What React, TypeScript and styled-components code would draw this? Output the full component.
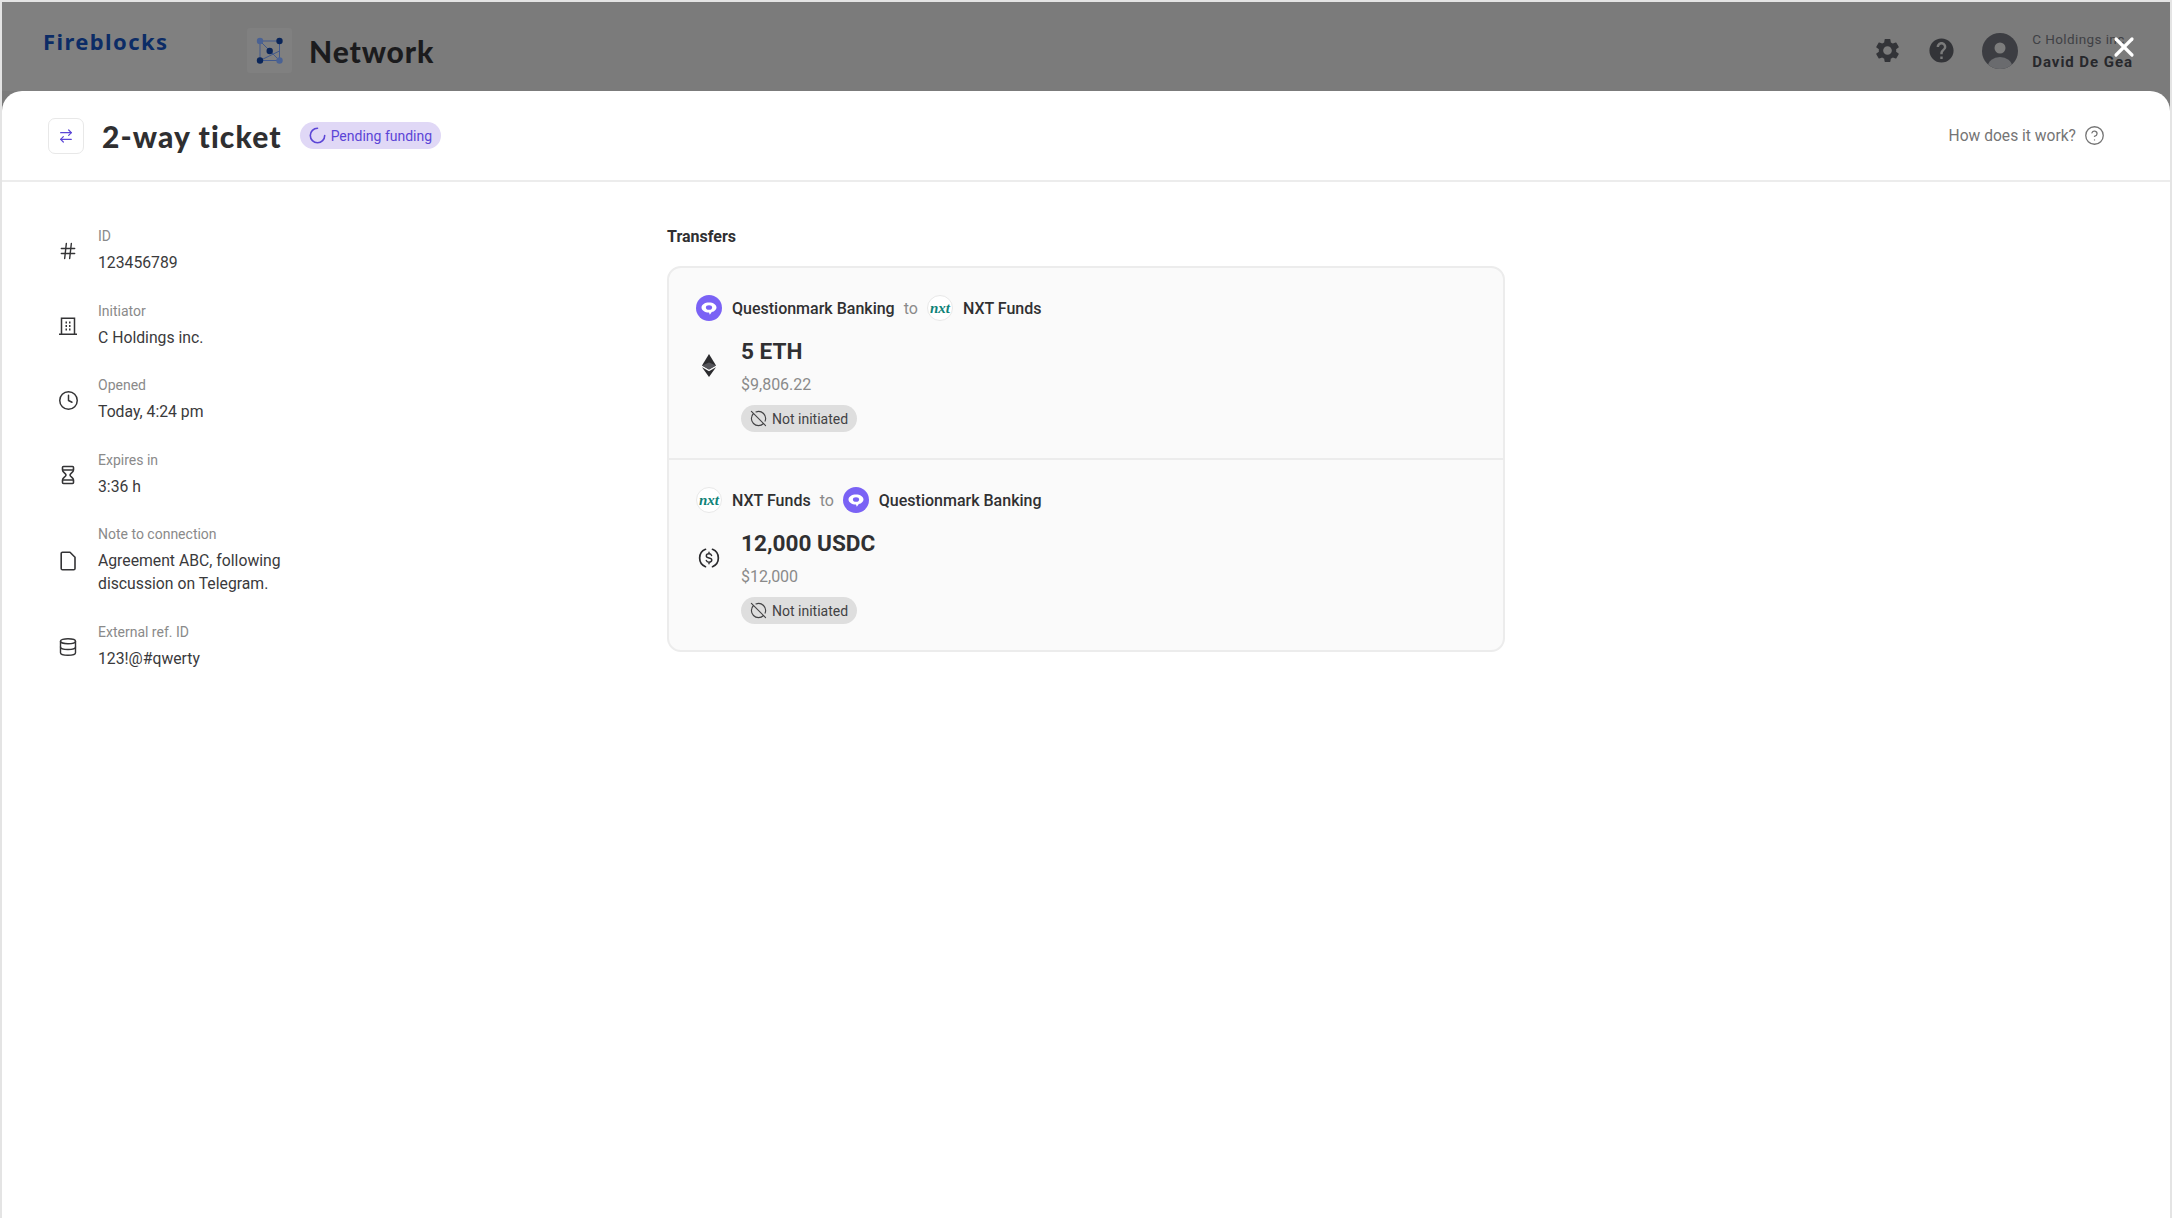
import React from 'react';
import styled, { createGlobalStyle } from 'styled-components';
import { ArrowRightLeft, CircleHelp, CircleOff, Clock, Database, Hash, X } from 'lucide-react';
import { MdHelp, MdSettings } from 'react-icons/md';

const GlobalStyle = createGlobalStyle`
  html, body {
    margin: 0;
    padding: 0;
    background: #fff;
    font-family: Roboto, 'Liberation Sans', sans-serif;
  }
  * {
    box-sizing: border-box;
  }
`;

function OfficeIcon() {
  return (
    <svg width="20" height="20" viewBox="0 0 20 20" fill="none" stroke="currentColor" strokeWidth="1.5">
      <path d="M1 18.2h18M3.5 18V2.2h13V18" />
      <path d="M7.5 6.500h1.500M11 6.500h1.500M7.500 10h1.500M11 10h1.500M7.500 13.500h1.500M11 13.500h1.500" strokeWidth="1.8" />
    </svg>
  );
}

function HourglassIcon() {
  return (
    <svg width="20" height="20" viewBox="0 0 20 20" fill="none" stroke="currentColor" strokeWidth="1.6" strokeLinejoin="round">
      <path d="M5.500 1.500h9a1 1 0 0 1 1 1V5c0 2.500-3.500 3-3.500 5s3.500 2.500 3.500 5v2.500a1 1 0 0 1-1 1h-9a1 1 0 0 1-1-1V15c0-2.500 3.500-3 3.500-5S4.500 7.500 4.500 5V2.500a1 1 0 0 1 1-1z" />
      <path d="M4.500 5h11M4.500 15h11" />
    </svg>
  );
}

function FileIcon() {
  return (
    <svg width="20" height="20" viewBox="0 0 20 20" fill="none" stroke="currentColor" strokeWidth="1.6" strokeLinejoin="round">
      <path d="M4.500 1.200h7.500l5 5v11.300a1.300 1.300 0 0 1-1.300 1.300H4.500a1.300 1.300 0 0 1-1.300-1.300v-15a1.300 1.300 0 0 1 1.300-1.300z" />
    </svg>
  );
}

function NetworkLogo() {
  return (
    <svg width="30" height="30" viewBox="0 0 30 30" fill="none">
      <path d="M5 5h19.500v19.500H5zM5 5l19.500 19.500M5 24.500L24.500 15" stroke="#41598c" strokeWidth="1" />
      <circle cx="5" cy="5" r="3.200" fill="#4a6294" />
      <circle cx="24.500" cy="5" r="3.200" fill="#0a2559" />
      <circle cx="14.700" cy="15" r="3.200" fill="#0a2559" />
      <circle cx="5" cy="24.500" r="3.200" fill="#0a2559" />
      <circle cx="24.500" cy="24.500" r="3.200" fill="#4a6294" />
    </svg>
  );
}

function AvatarIcon() {
  return (
    <svg width="36" height="36" viewBox="0 0 36 36">
      <defs>
        <clipPath id="avatar-clip">
          <circle cx="18" cy="18" r="18" />
        </clipPath>
      </defs>
      <circle cx="18" cy="18" r="18" fill="#3c3d42" />
      <circle cx="18" cy="15" r="5.500" fill="#7c7c7c" />
      <ellipse cx="18" cy="33" rx="12" ry="9" fill="#6a6b6e" clipPath="url(#avatar-clip)" />
    </svg>
  );
}

function SpinnerIcon() {
  return (
    <svg width="17" height="17" viewBox="0 0 17 17" fill="none" stroke="#5b45d6" strokeWidth="1.6" strokeLinecap="round">
      <path d="M8.500 1.300A7.200 7.200 0 1 0 15.700 8.500" />
    </svg>
  );
}

function EthIcon() {
  return (
    <svg width="14" height="23" viewBox="0 0 14 23">
      <path d="M7 0L0 11.500 7 15.500 14 11.500z" fill="#2b2b2e" />
      <path d="M0 13.200L7 23l7-9.800-7 4z" fill="#2b2b2e" />
      <path d="M0 11.500L7 8.500l7 3-7 4z" fill="#55555a" />
    </svg>
  );
}

function UsdcIcon() {
  return (
    <svg width="22" height="22" viewBox="0 0 22 22" fill="none" stroke="#2b2b2e" strokeWidth="1.700" strokeLinecap="round">
      <path d="M7.500 2.300A9.400 9.400 0 0 0 7.500 19.700M14.500 2.300A9.400 9.400 0 0 1 14.500 19.700" />
      <path d="M13.600 8.500c-.4-1.100-1.400-1.700-2.600-1.700-1.500 0-2.700.8-2.700 2.100 0 2.900 5.500 1.300 5.500 4.200 0 1.300-1.200 2.100-2.800 2.100-1.300 0-2.300-.6-2.700-1.700M11 5.200v1.600M11 15.200v1.600" strokeWidth="1.400" />
    </svg>
  );
}

function Questionmark() {
  return (
    <QuestionBadge>
      <svg width="16" height="13" viewBox="0 0 16 13">
        <path d="M8 .5C3.800.5.500 2.600.5 5.500s3.300 5 7.500 5l.8 2.200 2-2.600c2.700-.7 4.700-2.500 4.700-4.600C15.500 2.600 12.200.5 8 .5z" fill="#fff" />
        <ellipse cx="8" cy="5.500" rx="3.100" ry="2.300" fill="#7a62f5" />
      </svg>
    </QuestionBadge>
  );
}

export default function App() {
  return (
    <>
      <GlobalStyle />
      <Page>
        <TopBar>
          <LogoCell>Fireblocks</LogoCell>
          <AppCell>
            <AppIconBox>
              <NetworkLogo />
            </AppIconBox>
            <AppName>Network</AppName>
          </AppCell>
          <TopActions>
            <TopIcon>
              <MdSettings size={29} />
            </TopIcon>
            <TopIcon>
              <MdHelp size={29} />
            </TopIcon>
            <UserBlock>
              <AvatarIcon />
              <UserText>
                <UserOrg>C Holdings inc.</UserOrg>
                <UserName>David De Gea</UserName>
              </UserText>
            </UserBlock>
          </TopActions>
          <CloseButton>
            <X size={32} strokeWidth={2.4} />
          </CloseButton>
        </TopBar>
        <Modal>
          <ModalHeader>
            <TicketIconBox>
              <ArrowRightLeft size={16} color="#5b45d6" strokeWidth={1.8} />
            </TicketIconBox>
            <Title>2-way ticket</Title>
            <StatusPill>
              <SpinnerIcon />
              Pending funding
            </StatusPill>
            <HelpLink>
              How does it work?
              <CircleHelp size={21} strokeWidth={1.5} />
            </HelpLink>
          </ModalHeader>
          <ModalBody>
            <Details>
              {FIELDS.map((field) => (
                <Field key={field.label}>
                  <FieldIcon>{field.icon}</FieldIcon>
                  <div>
                    <FieldLabel>{field.label}</FieldLabel>
                    {field.value.map((line) => (
                      <FieldValue key={line}>{line}</FieldValue>
                    ))}
                  </div>
                </Field>
              ))}
            </Details>
            <TransfersColumn>
              <SectionTitle>Transfers</SectionTitle>
              <TransferCard>
                {TRANSFERS.map((transfer) => (
                  <TransferRow key={transfer.amount}>
                    <PartyLine>
                      {transfer.fromLogo}
                      <PartyName>{transfer.from}</PartyName>
                      <ToWord>to</ToWord>
                      {transfer.toLogo}
                      <PartyName>{transfer.to}</PartyName>
                    </PartyLine>
                    <AmountGrid>
                      <AssetIcon>{transfer.icon}</AssetIcon>
                      <div>
                        <Amount>{transfer.amount}</Amount>
                        <Fiat>{transfer.fiat}</Fiat>
                      </div>
                      <NotInitiated>
                        <CircleOff size={17} strokeWidth={1.6} />
                        Not initiated
                      </NotInitiated>
                    </AmountGrid>
                  </TransferRow>
                ))}
              </TransferCard>
            </TransfersColumn>
          </ModalBody>
        </Modal>
      </Page>
    </>
  );
}

const Page = styled.div`
  height: 1218px;
  display: flex;
  flex-direction: column;
  padding: 2px 2px 0;
  background: #e4e4e4;
  overflow: hidden;
`;

const TopBar = styled.header`
  position: relative;
  height: 89px;
  flex: none;
  display: flex;
  background: #7b7b7b;
`;

const LogoCell = styled.div`
  width: 208px;
  padding: 27px 0 0 41px;
  background: #808080;
  color: #0c2c66;
  font-family: 'Noto Sans', 'Open Sans', sans-serif;
  font-size: 22px;
  font-weight: 700;
  line-height: 24px;
  letter-spacing: 1.4px;
`;

const AppCell = styled.div`
  display: flex;
  align-items: center;
  padding: 8px 0 0 37px;
`;

const AppIconBox = styled.div`
  width: 45px;
  height: 45px;
  display: flex;
  align-items: center;
  justify-content: center;
  background: #808080;
  border-radius: 3px;
`;

const AppName = styled.div`
  margin-left: 17px;
  color: #1b1b1d;
  font-family: Lato, sans-serif;
  font-size: 30px;
  font-weight: 900;
  letter-spacing: 0.9px;
`;

const TopActions = styled.div`
  margin-left: auto;
  padding: 8px 37px 0 0;
  display: flex;
  align-items: center;
`;

const TopIcon = styled.div`
  width: 54px;
  display: flex;
  justify-content: center;
  color: #333438;
`;

const UserBlock = styled.div`
  display: flex;
  align-items: center;
  gap: 14px;
  margin-left: 14px;
`;

const UserText = styled.div`
  display: flex;
  flex-direction: column;
  gap: 6px;
`;

const UserOrg = styled.div`
  color: #404145;
  font-size: 13.5px;
  line-height: 16px;
  letter-spacing: 0.4px;
`;

const UserName = styled.div`
  color: #27282c;
  font-size: 15px;
  font-weight: 700;
  line-height: 18px;
  letter-spacing: 0.95px;
`;

const CloseButton = styled.div`
  position: absolute;
  top: 29px;
  right: 30px;
  display: flex;
  color: #fff;
`;

const Modal = styled.main`
  flex: 1;
  background: #fff;
  border-radius: 20px 20px 0 0;
  box-shadow: 0 -20px 0 0 #7b7b7b;
`;

const ModalHeader = styled.div`
  height: 91px;
  display: flex;
  align-items: center;
  padding: 0 65px 0 46px;
  border-bottom: 2px solid #ececec;
`;

const TicketIconBox = styled.div`
  width: 36px;
  height: 36px;
  display: flex;
  align-items: center;
  justify-content: center;
  border: 1.5px solid #e8e8e8;
  border-radius: 7px;
`;

const Title = styled.h1`
  margin: 0 0 0 18px;
  color: #2f2f31;
  font-family: Lato, sans-serif;
  font-size: 30px;
  font-weight: 900;
  line-height: 36px;
  letter-spacing: 1.1px;
`;

const StatusPill = styled.div`
  margin-left: 18px;
  height: 27px;
  display: flex;
  align-items: center;
  gap: 5px;
  padding: 0 9px;
  background: #e0d8f6;
  border-radius: 14px;
  color: #5b45d6;
  font-size: 14px;
`;

const HelpLink = styled.div`
  margin-left: auto;
  display: flex;
  align-items: center;
  gap: 8px;
  color: #757575;
  font-size: 15.6px;
`;

const ModalBody = styled.div`
  display: flex;
  padding: 46px 0 0 46px;
`;

const Details = styled.div`
  width: 619px;
  flex: none;
  display: flex;
  flex-direction: column;
  gap: 28.5px;
`;

const Field = styled.div`
  display: flex;
  align-items: center;
  gap: 10px;
`;

const FieldIcon = styled.div`
  width: 40px;
  display: flex;
  justify-content: center;
  color: #343436;
`;

const FieldLabel = styled.div`
  color: #8a8a8a;
  font-size: 14px;
  line-height: 17px;
  margin-bottom: 6px;
`;

const FieldValue = styled.div`
  color: #3a3a3c;
  font-size: 15.75px;
  line-height: 23px;
`;

const TransfersColumn = styled.section`
  width: 838px;
`;

const SectionTitle = styled.h2`
  margin: 0 0 21px;
  color: #303032;
  font-size: 16px;
  font-weight: 700;
  line-height: 17px;
`;

const TransferCard = styled.div`
  background: #fafafa;
  border: 2px solid #ececec;
  border-radius: 14px;
`;

const TransferRow = styled.div`
  padding: 27px 27px 26px;
  & + & {
    border-top: 2px solid #ececec;
  }
`;

const PartyLine = styled.div`
  display: flex;
  align-items: center;
  height: 26px;
`;

const QuestionBadge = styled.span`
  width: 26px;
  height: 26px;
  flex: none;
  display: flex;
  align-items: center;
  justify-content: center;
  background: #7a62f5;
  border-radius: 50%;
`;

const NxtBadge = styled.span`
  width: 26px;
  height: 26px;
  flex: none;
  display: flex;
  align-items: center;
  justify-content: center;
  background: #fff;
  border: 1px solid #e8e8e8;
  border-radius: 50%;
  color: #0f8378;
  font-family: 'Liberation Serif', serif;
  font-size: 15px;
  font-style: italic;
  font-weight: 700;
`;

const PartyName = styled.span`
  margin: 0 9px 0 10px;
  color: #303032;
  font-size: 16px;
  font-weight: 500;
`;

const ToWord = styled.span`
  margin: 0 9px 0 0;
  color: #8a8a8a;
  font-size: 16px;
`;

const AmountGrid = styled.div`
  display: grid;
  grid-template-columns: 26px auto;
  column-gap: 19px;
  align-items: center;
  margin-top: 16px;
`;

const AssetIcon = styled.div`
  display: flex;
  justify-content: center;
`;

const Amount = styled.div`
  color: #303032;
  font-size: 22.6px;
  font-weight: 700;
  line-height: 30px;
`;

const Fiat = styled.div`
  margin-top: 8px;
  color: #8a8a8a;
  font-size: 16px;
  line-height: 19px;
`;

const NotInitiated = styled.div`
  grid-column: 2;
  margin-top: 11px;
  width: fit-content;
  height: 27px;
  display: flex;
  align-items: center;
  gap: 5px;
  padding: 0 9px;
  background: #dedede;
  border-radius: 14px;
  color: #424244;
  font-size: 14px;
`;

const FIELDS = [
  { label: 'ID', icon: <Hash size={20} strokeWidth={1.7} />, value: ['123456789'] },
  { label: 'Initiator', icon: <OfficeIcon />, value: ['C Holdings inc.'] },
  { label: 'Opened', icon: <Clock size={21} strokeWidth={1.7} />, value: ['Today, 4:24 pm'] },
  { label: 'Expires in', icon: <HourglassIcon />, value: ['3:36 h'] },
  { label: 'Note to connection', icon: <FileIcon />, value: ['Agreement ABC, following', 'discussion on Telegram.'] },
  { label: 'External ref. ID', icon: <Database size={20} strokeWidth={1.7} />, value: ['123!@#qwerty'] },
];

const TRANSFERS = [
  {
    from: 'Questionmark Banking',
    to: 'NXT Funds',
    fromLogo: <Questionmark />,
    toLogo: <NxtBadge>nxt</NxtBadge>,
    icon: <EthIcon />,
    amount: '5 ETH',
    fiat: '$9,806.22',
  },
  {
    from: 'NXT Funds',
    to: 'Questionmark Banking',
    fromLogo: <NxtBadge>nxt</NxtBadge>,
    toLogo: <Questionmark />,
    icon: <UsdcIcon />,
    amount: '12,000 USDC',
    fiat: '$12,000',
  },
];
